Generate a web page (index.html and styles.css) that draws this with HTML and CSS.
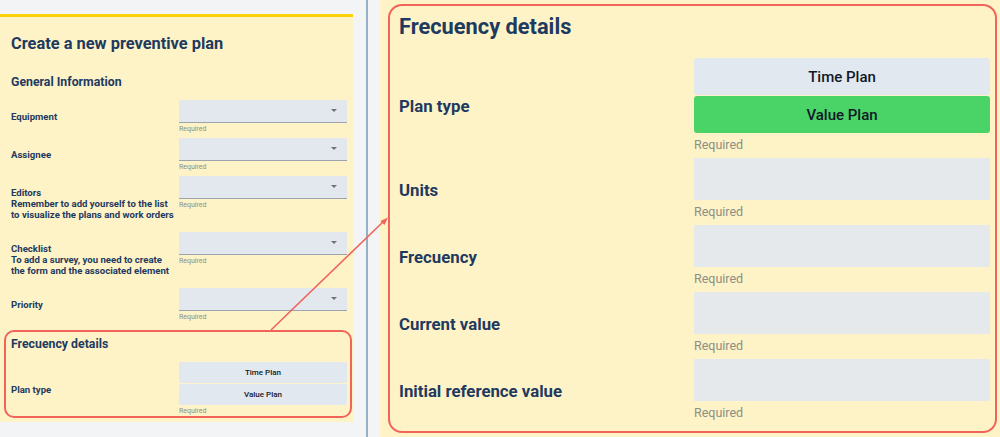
FILE: index.html
```html
<!DOCTYPE html>
<html lang="en">
<head>
<meta charset="utf-8">
<title>Create a new preventive plan</title>
<link rel="stylesheet" href="styles.css">
</head>
<body>
<div class="page">
  <div class="left-col">
    <section class="panel">
      <h1 class="panel-title">Create a new preventive plan</h1>
      <h2 class="panel-subtitle">General Information</h2>
      <div class="s-grid">
        <div class="s-label">Equipment</div>
        <div class="s-block">
          <div class="s-select"><span class="caret"></span></div>
          <div class="s-req">Required</div>
        </div>

        <div class="s-label">Assignee</div>
        <div class="s-block">
          <div class="s-select"><span class="caret"></span></div>
          <div class="s-req">Required</div>
        </div>

        <div class="s-label s-label-multi">Editors<br>Remember to add yourself to the list<br>to visualize the plans and work orders</div>
        <div class="s-block">
          <div class="s-select"><span class="caret"></span></div>
          <div class="s-req">Required</div>
        </div>

        <div class="s-label s-label-multi">Checklist<br>To add a survey, you need to create<br>the form and the associated element</div>
        <div class="s-block">
          <div class="s-select"><span class="caret"></span></div>
          <div class="s-req">Required</div>
        </div>

        <div class="s-label">Priority</div>
        <div class="s-block">
          <div class="s-select"><span class="caret"></span></div>
          <div class="s-req">Required</div>
        </div>
      </div>

      <div class="s-freq">
        <h2 class="panel-subtitle s-freq-title">Frecuency details</h2>
        <div class="s-grid s-grid-center">
          <div class="s-label s-label-center">Plan type</div>
          <div class="s-block">
            <div class="s-buttons">
              <div class="s-btn">Time Plan</div>
              <div class="s-btn">Value Plan</div>
            </div>
            <div class="s-req">Required</div>
          </div>
        </div>
      </div>
    </section>
  </div>

  <div class="divider"></div>

  <div class="right-col">
    <section class="l-freq">
      <h2 class="l-title">Frecuency details</h2>
      <div class="l-grid">
        <div class="l-label">Plan type</div>
        <div class="l-block">
          <div class="l-buttons">
            <div class="l-btn">Time Plan</div>
            <div class="l-btn l-btn-active">Value Plan</div>
          </div>
          <div class="l-req">Required</div>
        </div>

        <div class="l-label">Units</div>
        <div class="l-block">
          <div class="l-input"></div>
          <div class="l-req">Required</div>
        </div>

        <div class="l-label">Frecuency</div>
        <div class="l-block">
          <div class="l-input"></div>
          <div class="l-req">Required</div>
        </div>

        <div class="l-label">Current value</div>
        <div class="l-block">
          <div class="l-input"></div>
          <div class="l-req">Required</div>
        </div>

        <div class="l-label">Initial reference value</div>
        <div class="l-block">
          <div class="l-input"></div>
          <div class="l-req">Required</div>
        </div>
      </div>
    </section>
  </div>

  <svg class="callout" width="1000" height="437" viewBox="0 0 1000 437" aria-hidden="true">
    <line x1="271" y1="330" x2="384" y2="221" stroke="#f0645a" stroke-width="1.6"/>
    <polygon points="388,217.5 380.5,221 384.5,225" fill="#f0645a"/>
  </svg>
</div>
</body>
</html>
```

FILE: styles.css
```css
* {
  box-sizing: border-box;
}

html, body {
  margin: 0;
  padding: 0;
}

body {
  background: #f3f4f6;
  font-family: Roboto, "Liberation Sans", Arial, sans-serif;
  color: #1e3a5f;
}

.page {
  position: relative;
  display: flex;
  width: 1000px;
  height: 437px;
  overflow: hidden;
}

/* ---------- left (small form) ---------- */
.left-col {
  width: 366px;
  flex: none;
}

.panel {
  width: 353px;
  height: 408px;
  margin-top: 14px;
  background: #fef3c7;
  border-top: 3px solid #fdd10a;
  padding: 17px 6px 4px 11px;
}

.panel-title {
  margin: 0;
  font-size: 16.4px;
  line-height: 20px;
  font-weight: 700;
}

.panel-subtitle {
  margin: 20px 0 0;
  font-size: 12.3px;
  line-height: 16px;
  font-weight: 700;
}

.s-grid {
  display: grid;
  grid-template-columns: 168px 168px;
  row-gap: 4px;
  margin-top: 10px;
  align-items: start;
}

.s-label {
  font-size: 9.6px;
  line-height: 11px;
  font-weight: 700;
  padding-top: 11px;
  white-space: nowrap;
}

.s-label-multi {
  padding-bottom: 8px;
}

.s-grid-center {
  align-items: center;
}

.s-label-center {
  padding-top: 0;
}

.s-select {
  height: 23px;
  background: #e3e8ef;
  border-bottom: 1px solid #9ca3af;
  display: flex;
  align-items: center;
  justify-content: flex-end;
  padding-right: 10px;
}

.caret {
  width: 0;
  height: 0;
  border-left: 3px solid transparent;
  border-right: 3px solid transparent;
  border-top: 3px solid #6b7280;
  margin-top: -2px;
}

.s-req {
  font-size: 7px;
  line-height: 9px;
  padding-top: 2px;
  color: #8b8f86;
}

.s-freq {
  margin: 8px -5px 0 -7px;
  height: 88px;
  border: 2px solid #f0645a;
  border-radius: 10px;
  padding: 4px 3px 0 5px;
}

.s-freq-title {
  margin-top: 0;
}

.s-buttons {
  display: flex;
  flex-direction: column;
  gap: 1px;
}

.s-btn {
  height: 21px;
  background: #e2e8f0;
  border-radius: 2px;
  display: flex;
  align-items: center;
  justify-content: center;
  font-size: 8px;
  font-weight: 500;
  color: #111827;
}

/* ---------- divider ---------- */
.divider {
  width: 2px;
  flex: none;
  background: #94b0c4;
}

/* ---------- right (zoomed frequency details) ---------- */
.right-col {
  flex: 1;
  margin-left: 12px;
  background: #fef3c7;
  padding: 4px 3px 4px 8px;
}

.l-freq {
  height: 429px;
  border: 2px solid #f0645a;
  border-radius: 14px;
  padding: 9px 5px 0 9px;
}

.l-title {
  margin: 0;
  font-size: 21.8px;
  line-height: 24px;
  font-weight: 700;
}

.l-grid {
  display: grid;
  grid-template-columns: 295px 296px;
  row-gap: 4px;
  margin-top: 19px;
  align-items: center;
}

.l-label {
  font-size: 16.8px;
  line-height: 20px;
  font-weight: 700;
}

.l-buttons {
  display: flex;
  flex-direction: column;
  gap: 1px;
}

.l-btn {
  height: 37px;
  border-radius: 3px;
  background: #e2e8f0;
  display: flex;
  align-items: center;
  justify-content: center;
  font-size: 15px;
  font-weight: 500;
  color: #111827;
}

.l-btn-active {
  background: #4ad366;
}

.l-input {
  height: 42px;
  background: #e6e9ec;
}

.l-req {
  margin-top: 3px;
  font-size: 12.5px;
  line-height: 18px;
  color: #8b8f86;
}

/* ---------- callout arrow overlay ---------- */
.callout {
  position: absolute;
  left: 0;
  top: 0;
  pointer-events: none;
}
```
